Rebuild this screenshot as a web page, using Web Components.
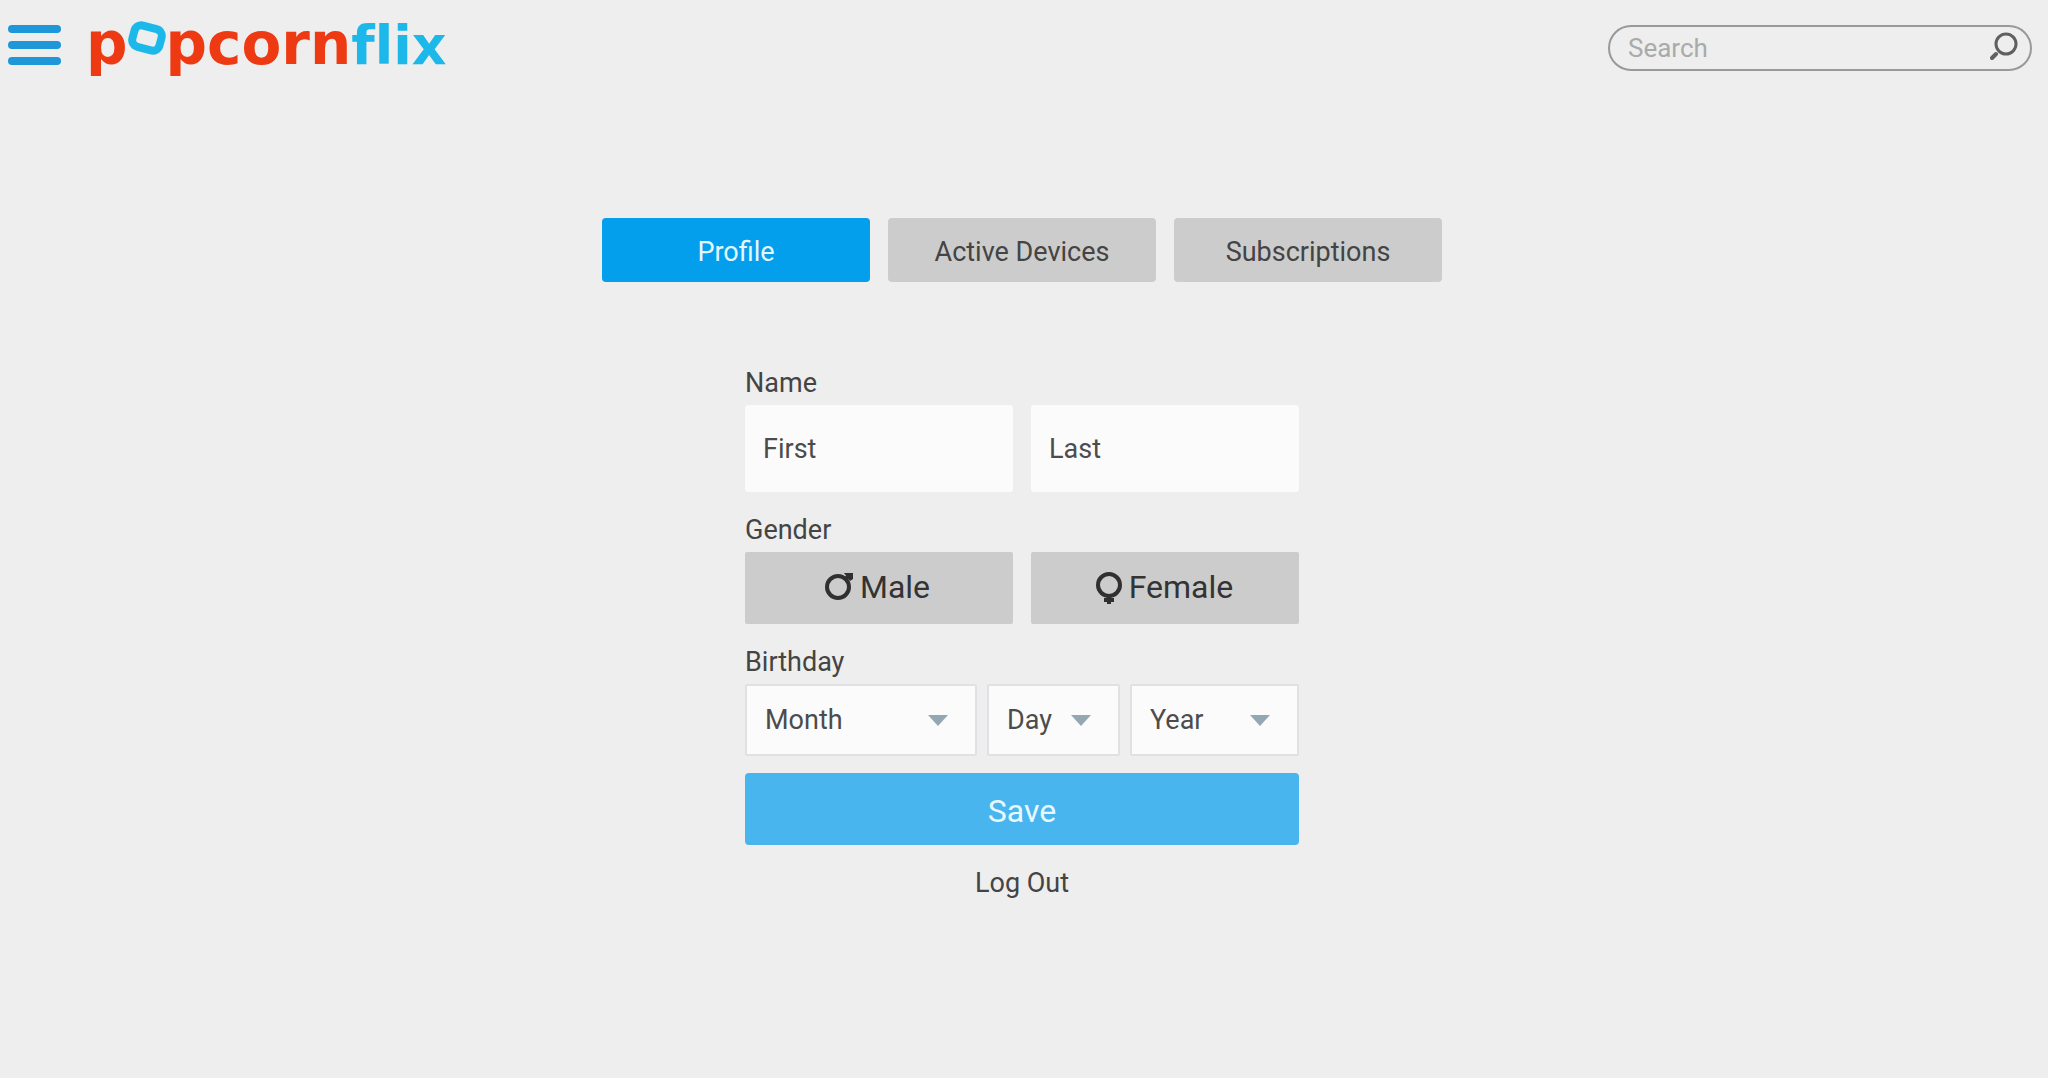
<!DOCTYPE html>
<html lang="en">
<head>
<meta charset="UTF-8">
<meta name="viewport" content="width=device-width, initial-scale=1.0">
<title>Popcornflix - Profile</title>
<style>
  body {
    margin: 0;
    background-color: #eeeeee;
    color: #444444;
    font-family: Roboto, "Open Sans", sans-serif;
    font-size: 27px;
  }
</style>
</head>
<body>
<profile-page></profile-page>

<script>
class PopcornLogo extends HTMLElement {
  constructor() {
    super();
    this.attachShadow({ mode: 'open' });
    this.shadowRoot.innerHTML = `
      <style>
        :host {
          display: block;
        }

        a {
          display: flex;
          align-items: baseline;
          padding-bottom: 6px;
          font-family: "DejaVu Sans", sans-serif;
          font-weight: bold;
          font-size: 58px;
          line-height: 64px;
          font-variant-ligatures: none;
          color: #ee3a12;
          text-decoration: none;
        }

        svg {
          width: 38px;
          height: 36px;
          align-self: flex-start;
          margin-top: 9px;
        }

        .flix {
          font-size: 54px;
          color: #1cb8ea;
        }
      </style>
      <a href="#">
        <span>p</span>
        <svg viewBox="0 0 38 36" role="img" aria-label="o">
          <rect x="5" y="6" width="28" height="22" rx="7" fill="none" stroke="#1cb8ea" stroke-width="8" transform="rotate(15 19 17)"/>
        </svg>
        <span>pcorn</span>
        <span class="flix">flix</span>
      </a>
    `;
  }
}

class SearchBox extends HTMLElement {
  constructor() {
    super();
    this.attachShadow({ mode: 'open' });
    this.shadowRoot.innerHTML = `
      <style>
        :host {
          display: block;
          width: 424px;
        }

        form {
          display: flex;
          align-items: center;
          height: 46px;
          box-sizing: border-box;
          padding: 0 12px 0 18px;
          border: 2px solid #999999;
          border-radius: 23px;
        }

        input {
          flex: 1;
          min-width: 0;
          padding: 0;
          border: none;
          outline: none;
          background: none;
          font: inherit;
          font-size: 26px;
          color: #444444;
        }

        input::placeholder {
          color: #aaaaaa;
          opacity: 1;
        }

        button {
          display: flex;
          padding: 0;
          border: none;
          background: none;
          cursor: pointer;
        }

        svg {
          width: 28px;
          height: 32px;
        }
      </style>
      <form>
        <input type="text" placeholder="Search" aria-label="Search">
        <button type="button" aria-label="Submit search">
          <svg viewBox="0 0 28 32" fill="none" stroke="#606060">
            <circle cx="16" cy="12" r="10" stroke-width="3"/>
            <path d="M6 22 L2 26" stroke-width="4" stroke-linecap="round"/>
          </svg>
        </button>
      </form>
    `;
  }
}

class SiteHeader extends HTMLElement {
  constructor() {
    super();
    this.attachShadow({ mode: 'open' });
    this.shadowRoot.innerHTML = `
      <style>
        :host {
          display: block;
        }

        header {
          display: flex;
          align-items: center;
          height: 96px;
          padding-right: 4px;
          box-sizing: border-box;
        }

        .menu {
          display: flex;
          flex-direction: column;
          gap: 8px;
          width: 53px;
          margin-right: 25px;
          padding: 0 0 6px;
          border: none;
          background: none;
          cursor: pointer;
        }

        .menu span {
          height: 8px;
          border-radius: 4px;
          background-color: #1e97d8;
        }

        search-box {
          margin-left: auto;
        }
      </style>
      <header>
        <button class="menu" aria-label="Menu"><span></span><span></span><span></span></button>
        <popcorn-logo></popcorn-logo>
        <search-box></search-box>
      </header>
    `;
  }
}

class TabButton extends HTMLElement {
  constructor() {
    super();
    this.attachShadow({ mode: 'open' });
    this.shadowRoot.innerHTML = `
      <style>
        :host {
          display: block;
        }

        button {
          width: 100%;
          height: 64px;
          padding: 3px 0 0;
          border: none;
          border-radius: 4px;
          background-color: #cccccc;
          color: #444444;
          font: inherit;
          cursor: pointer;
        }

        :host([active]) button {
          background-color: #039eec;
          color: #e4f7ff;
        }
      </style>
      <button><slot></slot></button>
    `;
  }
}

class NameField extends HTMLElement {
  connectedCallback() {
    const label = this.getAttribute('label');
    this.attachShadow({ mode: 'open' });
    this.shadowRoot.innerHTML = `
      <style>
        :host {
          display: block;
        }

        input {
          width: 100%;
          height: 87px;
          box-sizing: border-box;
          padding: 0 18px;
          border: none;
          border-radius: 3px;
          background-color: #fbfbfb;
          color: #444444;
          font: inherit;
        }

        input::placeholder {
          color: #4c4c4c;
          opacity: 1;
        }
      </style>
      <input type="text" placeholder="${label}" aria-label="${label} name">
    `;
  }
}

class GenderButton extends HTMLElement {
  constructor() {
    super();
    this.attachShadow({ mode: 'open' });
    this.shadowRoot.innerHTML = `
      <style>
        :host {
          display: block;
        }

        button {
          display: flex;
          align-items: center;
          justify-content: center;
          gap: 7px;
          width: 100%;
          height: 72px;
          padding: 0 3px 2px 0;
          border: none;
          border-radius: 2px;
          background-color: #cccccc;
          color: #333333;
          font: inherit;
          font-size: 32px;
          cursor: pointer;
        }
      </style>
      <button type="button" aria-pressed="false">
        <slot name="icon"></slot>
        <slot></slot>
      </button>
    `;
  }
}

class DateSelect extends HTMLElement {
  connectedCallback() {
    const label = this.getAttribute('label');
    this.attachShadow({ mode: 'open' });
    this.shadowRoot.innerHTML = `
      <style>
        :host {
          display: grid;
          align-items: center;
          min-width: 0;
        }

        select, .arrow {
          grid-area: 1 / 1;
        }

        select {
          appearance: none;
          width: 100%;
          height: 72px;
          box-sizing: border-box;
          padding: 0 20px 0 18px;
          border: 2px solid #e2e0e4;
          border-radius: 2px;
          background-color: #fbfbfb;
          color: #4c4c4c;
          font: inherit;
        }

        .arrow {
          justify-self: end;
          margin-right: 29px;
          border-left: 10px solid transparent;
          border-right: 10px solid transparent;
          border-top: 11px solid #94a8b3;
          pointer-events: none;
        }
      </style>
      <select aria-label="${label}"><option>${label}</option></select>
      <span class="arrow"></span>
    `;
  }
}

class FieldGroup extends HTMLElement {
  connectedCallback() {
    this.attachShadow({ mode: 'open' });
    this.shadowRoot.innerHTML = `
      <style>
        :host {
          display: block;
        }

        .label {
          line-height: 42px;
          margin-bottom: 1px;
        }

        .row {
          display: grid;
          grid-template-columns: var(--columns, 1fr 1fr);
          gap: var(--gap, 18px);
        }
      </style>
      <div role="group" aria-labelledby="label">
        <div class="label" id="label">${this.getAttribute('label')}</div>
        <div class="row"><slot></slot></div>
      </div>
    `;
  }
}

class ProfilePage extends HTMLElement {
  constructor() {
    super();
    this.attachShadow({ mode: 'open' });
    this.shadowRoot.innerHTML = `
      <style>
        :host {
          display: block;
          padding: 0 12px 0 8px;
        }

        nav {
          display: grid;
          grid-template-columns: repeat(3, 1fr);
          gap: 18px;
          max-width: 840px;
          margin: 122px auto 80px;
        }

        form {
          display: flex;
          flex-direction: column;
          gap: 17px;
          max-width: 554px;
          margin: 0 auto;
        }

        .birthday {
          --columns: 232fr 133fr 169fr;
          --gap: 10px;
        }

        .symbol {
          width: 28px;
          height: 36px;
        }

        .save {
          height: 72px;
          padding: 4px 0 0;
          border: none;
          border-radius: 4px;
          background-color: #49b5ee;
          color: #e8f8ff;
          font: inherit;
          font-size: 32px;
          cursor: pointer;
        }

        .logout {
          align-self: center;
          line-height: 42px;
          color: inherit;
          text-decoration: none;
        }
      </style>
      <site-header></site-header>
      <main>
        <nav>
          <tab-button active>Profile</tab-button>
          <tab-button>Active Devices</tab-button>
          <tab-button>Subscriptions</tab-button>
        </nav>
        <form>
          <field-group label="Name">
            <name-field label="First"></name-field>
            <name-field label="Last"></name-field>
          </field-group>
          <field-group label="Gender">
            <gender-button>
              <svg slot="icon" class="symbol" viewBox="0 0 28 36" fill="none" stroke="#303030" stroke-width="4">
                <circle cx="13" cy="18" r="11"/>
                <path d="M20 10 L24 7"/>
                <path d="M19 4 H28 V10 L25 12 Z" fill="#303030" stroke="none"/>
              </svg>Male</gender-button>
            <gender-button>
              <svg slot="icon" class="symbol" viewBox="0 0 28 36" fill="none" stroke="#303030" stroke-width="4">
                <circle cx="15" cy="16" r="11"/>
                <path d="M15 27 V35 M10 31 H20"/>
              </svg>Female</gender-button>
          </field-group>
          <field-group label="Birthday" class="birthday">
            <date-select label="Month"></date-select>
            <date-select label="Day"></date-select>
            <date-select label="Year"></date-select>
          </field-group>
          <button type="button" class="save">Save</button>
          <a href="#" class="logout">Log Out</a>
        </form>
      </main>
    `;
  }
}

customElements.define('popcorn-logo', PopcornLogo);
customElements.define('search-box', SearchBox);
customElements.define('site-header', SiteHeader);
customElements.define('tab-button', TabButton);
customElements.define('name-field', NameField);
customElements.define('gender-button', GenderButton);
customElements.define('date-select', DateSelect);
customElements.define('field-group', FieldGroup);
customElements.define('profile-page', ProfilePage);
</script>
</body>
</html>
